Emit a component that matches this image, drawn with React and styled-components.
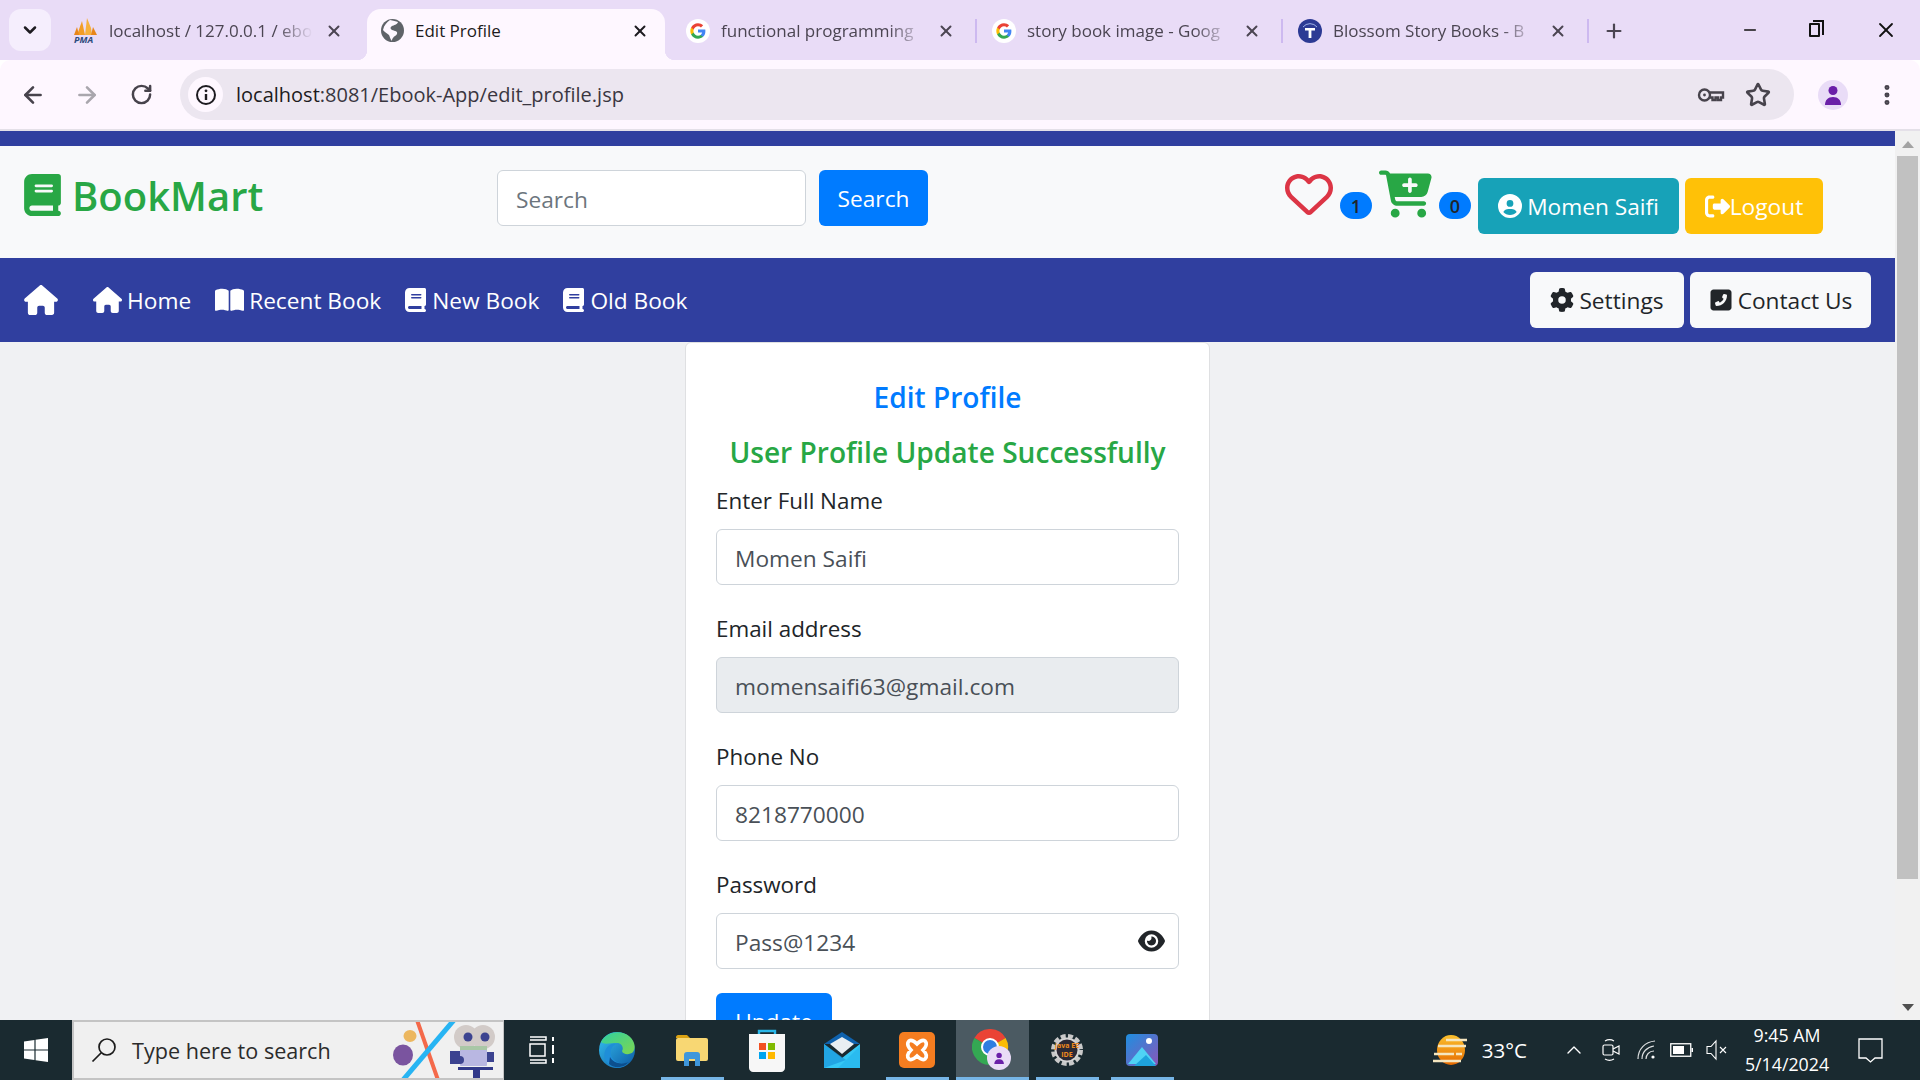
import React from 'react';
import styled, { createGlobalStyle } from 'styled-components';
import { ArrowLeft, ArrowRight, RotateCw, Star, X, Plus, Minus, ChevronDown, ChevronUp, EllipsisVertical } from 'lucide-react';
import {
  FaBook, FaHouse, FaBookOpen, FaRegHeart, FaCartPlus, FaCircleUser, FaRightFromBracket,
  FaGear, FaSquarePhoneFlip, FaEye,
} from 'react-icons/fa6';

const Global = createGlobalStyle`
  html, body { margin: 0; padding: 0; overflow: hidden; }
  * { box-sizing: border-box; }
  body { font-family: "Open Sans", "Liberation Sans", sans-serif; }
`;

const Screen = styled.div`
  width: 1920px;
  height: 1080px;
  display: flex;
  flex-direction: column;
  overflow: hidden;
`;

/* browser chrome */
const TabStrip = styled.div`
  height: 60px;
  flex: none;
  display: flex;
  align-items: stretch;
  padding-top: 9px;
  padding-left: 9px;
  background: #e9dcf7;
`;
const TabList = styled.div`
  width: 42px;
  height: 42px;
  margin-right: 8px;
  border-radius: 12px;
  background: #f5eefd;
  display: flex;
  align-items: center;
  justify-content: center;
  color: #1d1b20;
`;
const Tab = styled.div`
  position: relative;
  width: 298px;
  margin: 0 4px 0 2px;
  padding: 0 16px 8px 14px;
  display: flex;
  align-items: center;
  border-radius: 14px 14px 0 0;
  background: ${p => (p.$active ? '#fef7ff' : 'transparent')};
  color: ${p => (p.$active ? '#1d1b20' : '#4b4552')};
  ${p => p.$active && `
    &::before, &::after {
      content: '';
      position: absolute;
      bottom: 0;
      width: 10px;
      height: 10px;
    }
    &::before { left: -10px; background: radial-gradient(circle at 0 0, transparent 10px, #fef7ff 10.5px); }
    &::after { right: -10px; background: radial-gradient(circle at 100% 0, transparent 10px, #fef7ff 10.5px); }
  `}
`;
const Favicon = styled.span`
  width: 22px;
  height: 22px;
  flex: none;
  margin-right: 12px;
  display: flex;
  align-items: center;
  justify-content: center;
  svg { flex: none; }
`;
const TabTitle = styled.span`
  flex: 1;
  min-width: 0;
  margin-right: 12px;
  font-size: 17px;
  white-space: nowrap;
  overflow: hidden;
  ${p => p.$fade && `mask-image: linear-gradient(to right, #000 82%, transparent 100%);`}
`;
const TabSep = styled.span`
  width: 2px;
  height: 24px;
  margin-top: 10px;
  background: ${p => (p.$show ? '#cdb9f0' : 'transparent')};
`;
const NewTab = styled.span`
  margin: 11px 0 0 14px;
  height: 22px;
  color: #4b4552;
`;
const WindowControls = styled.div`
  margin: -9px 0 0 auto;
  display: flex;
`;
const WindowButton = styled.span`
  width: 68px;
  height: 60px;
  display: flex;
  align-items: center;
  justify-content: center;
  color: #111;
`;
const RestoreGlyph = styled.span`
  position: relative;
  width: 11px;
  height: 14px;
  margin-right: 7px;
  border: 2px solid #111;
  border-radius: 1px;
  &::after {
    content: '';
    position: absolute;
    left: 2px;
    top: -5px;
    width: 9px;
    height: 13px;
    border-top: 2px solid #111;
    border-right: 2px solid #111;
  }
`;

const Toolbar = styled.div`
  height: 71px;
  flex: none;
  display: flex;
  align-items: flex-start;
  padding: 9px 0 0 6px;
  background: #fef7ff;
  border-bottom: 2px solid #e4e0e8;
  border-radius: 10px 10px 0 0;
`;
const NavButton = styled.span`
  width: 54px;
  height: 51px;
  display: flex;
  align-items: center;
  justify-content: center;
  color: ${p => (p.$off ? '#a9a6ad' : '#47434c')};
`;
const Omnibox = styled.div`
  width: 1614px;
  height: 51px;
  margin-left: 12px;
  padding: 0 23px 0 8px;
  border-radius: 26px;
  background: #ece6f0;
  display: flex;
  align-items: center;
`;
const InfoChip = styled.span`
  width: 35px;
  height: 35px;
  margin-right: 13px;
  border-radius: 50%;
  background: #fef7ff;
  display: flex;
  align-items: center;
  justify-content: center;
`;
const Url = styled.span`
  flex: 1;
  font-size: 20px;
  color: #3a3640;
  b { font-weight: 400; color: #1d1b20; }
`;
const OmniIcon = styled.span`
  margin-left: 20px;
  display: flex;
  color: #47434c;
`;
const Avatar = styled.span`
  width: 30px;
  height: 30px;
  margin: 11px 0 0 24px;
  border-radius: 50%;
  background: #e9dcf7;
  display: flex;
  align-items: center;
  justify-content: center;
`;
const Kebab = styled.span`
  margin: 13px 0 0 26px;
  color: #47434c;
`;

/* page */
const Viewport = styled.div`
  flex: 1;
  min-height: 0;
  display: flex;
`;
const Page = styled.div`
  flex: 1;
  min-width: 0;
  display: flex;
  flex-direction: column;
`;
const Stripe = styled.div`
  height: 15px;
  flex: none;
  background: #303f9f;
`;
const Header = styled.header`
  height: 112px;
  flex: none;
  padding: 24px 72px 0 24px;
  display: flex;
  align-items: flex-start;
  background: #f8f9fa;
`;
const Logo = styled.div`
  width: 473px;
  margin-top: 4px;
  display: flex;
  align-items: center;
  gap: 11px;
  color: #28a745;
  font-size: 40px;
  line-height: 44px;
  font-weight: 600;
`;
const LogoIcon = styled(FaBook)`
  width: 37px;
  height: 42px;
  margin-top: -2px;
`;
const SearchForm = styled.form`
  display: flex;
  gap: 13px;
`;
const Input = styled.input`
  display: block;
  width: ${p => p.$w || '100%'};
  height: 56px;
  padding: 2px 18px 0;
  border: 1px solid #ced4da;
  border-radius: 6px;
  background: ${p => (p.disabled ? '#e9ecef' : '#fff')};
  color: #495057;
  font: 400 22.7px "Open Sans", sans-serif;
  opacity: 1;
  -webkit-text-fill-color: #495057;
  &::placeholder { color: #6c757d; -webkit-text-fill-color: #6c757d; opacity: 1; }
`;
const Button = styled.button`
  height: 56px;
  width: ${p => p.$w};
  margin-top: ${p => p.$mt || 0};
  padding: 0;
  flex: none;
  border: 0;
  border-radius: 6px;
  background: ${p => p.$bg || '#007bff'};
  color: ${p => p.$fg || '#fff'};
  font: 400 22.7px "Open Sans", sans-serif;
  display: flex;
  align-items: center;
  justify-content: center;
  gap: ${p => p.$gap || '5px'};
`;
const UserTools = styled.div`
  margin-left: auto;
  display: flex;
  align-items: flex-start;
  gap: 7px;
`;
const Heart = styled(FaRegHeart)`
  width: 48px;
  height: 48px;
  color: #dc3545;
`;
const Cart = styled(FaCartPlus)`
  width: 53px;
  height: 48px;
  color: #28a745;
`;
const Badge = styled.span`
  width: 32px;
  height: 27px;
  margin-top: 22px;
  border-radius: 14px;
  background: #007bff;
  color: #212529;
  font-size: 18px;
  font-weight: 600;
  display: flex;
  align-items: center;
  justify-content: center;
`;
const HeadButtons = styled.div`
  margin-top: 8px;
  display: flex;
  gap: 6px;
`;
const NavBar = styled.nav`
  height: 84px;
  flex: none;
  padding: 0 24px;
  display: flex;
  align-items: center;
  background: #303f9f;
`;
const BrandHome = styled(FaHouse)`
  width: 34px;
  height: 30px;
  margin-right: 35px;
  color: #fff;
`;
const NavLink = styled.a`
  margin-right: 24px;
  display: flex;
  align-items: center;
  gap: ${p => p.$gap || '5px'};
  color: #fff;
  font-size: 22.7px;
  svg { width: ${p => p.$icon || '29px'}; height: 26px; }
`;
const NavRight = styled.div`
  margin-left: auto;
  display: flex;
  gap: 6px;
`;
const Main = styled.main`
  flex: 1;
  min-height: 0;
  overflow: hidden;
  display: flex;
  justify-content: center;
  background: #f0f1f3;
`;
const Card = styled.section`
  width: 525px;
  height: 720px;
  flex: none;
  padding: 37px 30px 0;
  border: 1px solid #dfe0e2;
  border-radius: 6px;
  background: #fff;
`;
const Title = styled.h5`
  margin: 0 0 ${p => p.$mb};
  height: 35px;
  text-align: center;
  font-size: 28.1px;
  line-height: 35px;
  font-weight: 600;
  color: ${p => p.$color};
`;
const Group = styled.div`
  position: relative;
  margin-bottom: 26px;
`;
const Label = styled.label`
  display: block;
  height: 35px;
  margin-bottom: 11px;
  font-size: 22.4px;
  line-height: 35px;
  color: #212529;
`;
const EyeIcon = styled(FaEye)`
  position: absolute;
  right: 14px;
  bottom: 16px;
  width: 27px;
  height: 24px;
  color: #212529;
`;
const Track = styled.aside`
  width: 25px;
  flex: none;
  padding: 0 2px;
  display: flex;
  flex-direction: column;
  align-items: stretch;
  background: #f1f1f1;
`;
const Arrow = styled.span`
  width: 0;
  height: 0;
  margin: ${p => p.$m};
  align-self: center;
  border-left: 6px solid transparent;
  border-right: 6px solid transparent;
  ${p => (p.$down ? 'border-top: 7px solid #505050;' : 'border-bottom: 7px solid #a3a3a3;')}
`;
const Thumb = styled.span`
  height: 723px;
  background: #c1c1c1;
`;

/* taskbar */
const Taskbar = styled.footer`
  height: 60px;
  flex: none;
  display: flex;
  align-items: stretch;
  background: #1a2a30;
  color: #fff;
`;
const StartButton = styled.span`
  width: 72px;
  display: flex;
  align-items: center;
  justify-content: center;
`;
const SearchBox = styled.div`
  width: 432px;
  padding-left: 17px;
  display: flex;
  align-items: center;
  border: 2px solid #c4c4c4;
  border-right-width: 1px;
  background: #f0f0f0;
  color: #2b2b2b;
  font-size: 21.6px;
  overflow: hidden;
`;
const SearchText = styled.span`
  margin-left: 15px;
  flex: 1;
`;
const AppSlot = styled.span`
  width: 75px;
  display: flex;
  align-items: center;
  justify-content: center;
  border-bottom: 3px solid ${p => (p.$open ? '#76b5e6' : 'transparent')};
  padding-top: 3px;
  background-clip: padding-box;
  background-color: ${p => (p.$active ? '#4b5a62' : 'transparent')};
  ${p => p.$open && !p.$active && 'border-image: linear-gradient(to right, transparent 8px, #76b5e6 8px, #76b5e6 calc(100% - 6px), transparent calc(100% - 6px)) 1;'}
  ${p => p.$active && 'margin-left: 2px; width: 73px;'}
`;
const Tray = styled.div`
  margin-left: auto;
  display: flex;
  align-items: center;
`;
const TrayIcon = styled.span`
  display: flex;
  margin-left: ${p => p.$ml};
`;
const Temp = styled.span`
  margin-left: 14px;
  font-size: 20.5px;
`;
const Clock = styled.div`
  width: 118px;
  text-align: center;
  font-size: 17.8px;
  line-height: 29px;
`;

/* drawn icons */
const GoogleIcon = () => (
  <svg width="24" height="24" viewBox="0 0 24 24">
    <circle cx="12" cy="12" r="12" fill="#fff" />
    <g transform="translate(3.6 3.6) scale(.7)">
      <path fill="#4285F4" d="M22.56 12.25c0-.78-.07-1.53-.2-2.25H12v4.26h5.92c-.26 1.37-1.04 2.53-2.21 3.31v2.77h3.57c2.08-1.92 3.28-4.74 3.28-8.09z" />
      <path fill="#34A853" d="M12 23c2.97 0 5.46-.98 7.28-2.66l-3.57-2.77c-.98.66-2.23 1.06-3.71 1.06-2.86 0-5.29-1.93-6.16-4.53H2.18v2.84C3.99 20.53 7.7 23 12 23z" />
      <path fill="#FBBC05" d="M5.84 14.09c-.22-.66-.35-1.36-.35-2.09s.13-1.43.35-2.09V7.07H2.18C1.43 8.55 1 10.22 1 12s.43 3.45 1.18 4.93l2.85-2.22.81-.62z" />
      <path fill="#EA4335" d="M12 5.38c1.62 0 3.06.56 4.21 1.64l3.15-3.15C17.45 2.09 14.97 1 12 1 7.7 1 3.99 3.47 2.18 7.07l3.66 2.84c.87-2.6 3.3-4.53 6.16-4.53z" />
    </g>
  </svg>
);
const PmaIcon = () => (
  <svg width="28" height="28" viewBox="0 0 28 28">
    <path fill="#f29d26" d="M5 18 10 4l3 14z" />
    <path fill="#f6b13c" d="M13 18 15 1l4 10 1 7z" />
    <path fill="#e8861a" d="M2 18 5 10l2 8zM19 18l2-8 4 8z" />
    <text x="2" y="26" fontSize="9" fontWeight="700" fontStyle="italic" fontFamily="Open Sans" fill="#2c4a7c">PMA</text>
  </svg>
);
const GlobeIcon = () => (
  <svg width="23" height="23" viewBox="0 0 23 23">
    <circle cx="11.5" cy="11.500" r="11.500" fill="#5f6368" />
    <path d="M9 1c3 1 6 1 8 2-1 3-4 3-6 4-2 1-2 3 0 4 3 1 6 1 5 4-1 2-3 2-4 4-1 1-1 2-1 3-2-2-2-4-3-6-2-2-5-3-6-5C3 6 6 3 9 1z" fill="#fef7ff" />
  </svg>
);
const BlossomIcon = () => (
  <svg width="24" height="24" viewBox="0 0 24 24">
    <circle cx="12" cy="12" r="12" fill="#2c3a94" />
    <path d="M5 8a9 9 0 0 1 14 0" fill="none" stroke="#9fb2e8" strokeWidth="1" />
    <path d="M7 9h10v2.400h-3.600V19h-2.800v-7.600H7z" fill="#fff" />
  </svg>
);
const KeyIcon = () => (
  <svg width="28" height="20" viewBox="0 0 28 20" fill="none" stroke="#47434c" strokeWidth="2.4">
    <circle cx="7.5" cy="10" r="5.5" />
    <circle cx="7.5" cy="10" r="1.4" fill="#47434c" strokeWidth="0" />
    <path d="M13 7.5h13v5h-2v2.500h-3v-2.500h-2.500v2.500h-3v-2.500H13" />
  </svg>
);
const InfoIcon = () => (
  <svg width="22" height="22" viewBox="0 0 22 22" fill="none" stroke="#1d1b20" strokeWidth="2">
    <circle cx="11" cy="11" r="9" />
    <path d="M11 10v6" strokeWidth="2.4" />
    <circle cx="11" cy="6.8" r="1.4" fill="#1d1b20" stroke="none" />
  </svg>
);
const PersonIcon = ({ size = 22 }) => (
  <svg width={size} height={size} viewBox="0 0 22 22" fill="#6a1fa8">
    <circle cx="11" cy="6.5" r="4.5" />
    <path d="M3 21c0-5 3-8 8-8s8 3 8 8z" />
  </svg>
);
const WindowsLogo = () => (
  <svg width="24" height="24" viewBox="0 0 24 24" fill="#fff">
    <path d="M0 3.400 10.400 2v9.400H0zM11.600 1.800 24 0v11.400H11.600zM0 12.600h10.400V22L0 20.600zM11.600 12.600H24V24l-12.400-1.800z" />
  </svg>
);
const Magnifier = () => (
  <svg width="26" height="26" viewBox="0 0 26 26" fill="none" stroke="#1c1c1c" strokeWidth="1.7">
    <circle cx="16" cy="10" r="8" />
    <path d="M10 16 1.500 24.500" />
  </svg>
);
const SearchArt = () => (
  <svg width="116" height="56" viewBox="0 0 116 56">
    <path d="M30 -2 51 58" stroke="#f4694a" strokeWidth="4" />
    <path d="M67 -2 16 58" stroke="#27b4f3" strokeWidth="5" />
    <ellipse cx="16" cy="33" rx="10" ry="10.500" fill="#7a549f" />
    <ellipse cx="23" cy="14" rx="6.500" ry="6" fill="#ecb75f" />
    <circle cx="79" cy="15" r="12" fill="#d2cbc8" />
    <circle cx="96" cy="15" r="12" fill="#d2cbc8" />
    <circle cx="81" cy="15" r="4.500" fill="#3c4390" />
    <circle cx="98" cy="15" r="4.500" fill="#3c4390" />
    <rect x="73" y="24" width="27" height="5" fill="#a9c7a6" />
    <rect x="73" y="28" width="27" height="16" rx="1" fill="#b9b7e2" />
    <path d="M63 29h10v13H63z" fill="#3c4390" />
    <circle cx="73" cy="38" r="4" fill="#3c4390" />
    <path d="M100 30h7v10h-7z" fill="#3c4390" />
    <path d="M71 45h35v3H71zM86 47h7v9h-7z" fill="#32398a" />
  </svg>
);
const TaskViewIcon = () => (
  <svg width="26" height="28" viewBox="0 0 26 28" fill="none" stroke="#fff" strokeWidth="1.5">
    <path d="M1 1h16v3H1M1 27h16v-3H1" />
    <rect x="1" y="8" width="15" height="12" />
    <path d="M24 1v4M24 9v9M24 22v5" strokeWidth="2" />
  </svg>
);
const EdgeIcon = () => (
  <svg width="38" height="38" viewBox="0 0 38 38">
    <defs>
      <linearGradient id="edgeA" x1="0" y1="0" x2="1" y2="1">
        <stop offset="0" stopColor="#35c1f1" />
        <stop offset="1" stopColor="#0c59a4" />
      </linearGradient>
      <linearGradient id="edgeB" x1="0" y1="0" x2="1" y2="1">
        <stop offset="0" stopColor="#2fd0a0" />
        <stop offset="1" stopColor="#7ed64f" />
      </linearGradient>
    </defs>
    <circle cx="19" cy="19" r="18" fill="url(#edgeA)" />
    <path d="M3 11C8 1 22-2 31 5c6 5 7 12 4 16-3 3-10 3-11-1 2-3 0-8-5-8C12 12 6 14 3 11z" fill="url(#edgeB)" />
    <path d="M18 13c-5 2-7 9-3 15 3 4 9 6 16 3-4 6-12 7-18 4-5-3-8-9-6-15 2-5 6-8 11-7z" fill="#1f8ed8" />
    <path d="M12 26c3 6 11 8 19 5-5 6-14 7-20 2z" fill="#0c4f8e" />
  </svg>
);
const ExplorerIcon = () => (
  <svg width="34" height="34" viewBox="0 0 34 34">
    <path d="M1 4c0-1 1-2 2-2h9l3 3H1z" fill="#dba213" />
    <rect x="1" y="5" width="32" height="23" rx="2" fill="#f8d773" />
    <path d="M9 33V22c0-2 1-3 3-3h10c2 0 3 1 3 3v11h-5v-7h-6v7z" fill="#3f97dc" />
  </svg>
);
const StoreIcon = () => (
  <svg width="36" height="44" viewBox="0 0 36 44">
    <path d="M10 9V3h16v6" fill="none" stroke="#29b6e8" strokeWidth="2.4" />
    <path d="M0 6h36v34c0 2-2 4-4 4H4c-2 0-4-2-4-4z" fill="#f7f7f7" />
    <path d="M10 15h7v7h-7z" fill="#f25022" />
    <path d="M19 15h7v7h-7z" fill="#7fba00" />
    <path d="M10 24h7v7h-7z" fill="#00a4ef" />
    <path d="M19 24h7v7h-7z" fill="#ffb900" />
  </svg>
);
const MailIcon = () => (
  <svg width="36" height="36" viewBox="0 0 36 36">
    <path d="M0 12 18 0l18 12z" fill="#0f62ae" />
    <path d="M6 12 18 5l12 7-12 10z" fill="#e9eef2" />
    <path d="M0 12 18 26 36 12v24H0z" fill="#35c8f5" />
    <path d="M0 36V12l22 16z" fill="#1b95dc" opacity=".7" />
    <path d="M36 36H14l22-22z" fill="#18a3e4" opacity=".35" />
  </svg>
);
const XamppIcon = () => (
  <svg width="36" height="36" viewBox="0 0 36 36" fill="none">
    <rect width="36" height="36" rx="5" fill="#f57d20" />
    <path d="M10 9c3-2 6 1 8 3 2-2 5-5 8-3 3 3 0 7-2 9 2 2 5 6 2 9-3 2-6-1-8-3-2 2-5 5-8 3-3-3 0-7 2-9-2-2-5-6-2-9z" stroke="#fff" strokeWidth="3.6" />
    <path d="M15 18h6" stroke="#f57d20" strokeWidth="2" />
  </svg>
);
const ChromeIcon = () => (
  <svg width="42" height="42" viewBox="0 0 42 42">
    <path d="M18 18 2.400 9A18 18 0 0 1 33.600 9Z" fill="#ea4335" />
    <path d="M18 18 33.600 9A18 18 0 0 1 18 36Z" fill="#fbbc05" />
    <path d="M18 18 18 36A18 18 0 0 1 2.400 9Z" fill="#34a853" />
    <circle cx="18" cy="18" r="8" fill="#2f7de1" stroke="#fff" strokeWidth="2" />
    <circle cx="27" cy="29" r="12" fill="#e9dcf7" />
    <g transform="translate(20.500 22.500) scale(.6)"><PersonIcon /></g>
  </svg>
);
const JavaIcon = () => (
  <svg width="34" height="34" viewBox="0 0 34 34">
    <circle cx="17" cy="17" r="14" fill="none" stroke="#c9c9c9" strokeWidth="4" strokeDasharray="5 2.400" />
    <circle cx="17" cy="17" r="12.500" fill="#d4d4d4" />
    <circle cx="17" cy="17" r="10.500" fill="#2b2834" />
    <text x="17" y="15" fontSize="7" fontWeight="700" textAnchor="middle" fontFamily="Open Sans" fill="#f08a1c">Java EE</text>
    <text x="17" y="24" fontSize="7" fontWeight="700" textAnchor="middle" fontFamily="Open Sans" fill="#f08a1c">IDE</text>
  </svg>
);
const PhotosIcon = () => (
  <svg width="32" height="32" viewBox="0 0 32 32">
    <defs>
      <linearGradient id="photoBg" x1="0" y1="0" x2="1" y2="1">
        <stop offset="0" stopColor="#1e8fe0" />
        <stop offset="1" stopColor="#8a56b8" />
      </linearGradient>
    </defs>
    <rect width="32" height="32" rx="4" fill="url(#photoBg)" />
    <circle cx="23" cy="7" r="3" fill="#fff" />
    <path d="M2 30 16 13l14 17z" fill="#4fd2f5" />
    <path d="M8 32l12-11 10 11z" fill="#1ea3dd" />
  </svg>
);
const SunIcon = () => (
  <svg width="36" height="32" viewBox="0 0 36 32">
    <defs>
      <linearGradient id="sun" x1="0" y1="0" x2="0" y2="1">
        <stop offset="0" stopColor="#fbc02d" />
        <stop offset="1" stopColor="#e66a00" />
      </linearGradient>
    </defs>
    <ellipse cx="19" cy="16" rx="14" ry="15" fill="url(#sun)" />
    <path d="M14 6h21M6 12h28M2 20h20M24 20h6M1 27h28" stroke="#f5e6c0" strokeWidth="2.4" />
  </svg>
);
const MeetIcon = () => (
  <svg width="18" height="24" viewBox="0 0 18 24" fill="none" stroke="#fff" strokeWidth="1.2">
    <rect x="1" y="7" width="10" height="10" rx="1.5" />
    <path d="M11 11l6-3v8l-6-3M3 3a9 9 0 0 1 9 0M3 21a9 9 0 0 0 9 0" />
  </svg>
);
const WifiIcon = () => (
  <svg width="20" height="20" viewBox="0 0 20 20" fill="none" stroke="#fff" strokeWidth="1.2">
    <path d="M1 19C1 9 8 2 18 1M5 19c0-7 5-12 12-13M9 19c0-4 3-8 8-8" strokeOpacity=".85" />
    <circle cx="16" cy="17" r="1.6" fill="#fff" stroke="none" />
  </svg>
);
const BatteryIcon = () => (
  <svg width="23" height="14" viewBox="0 0 23 14">
    <rect x=".75" y=".75" width="20" height="12.500" fill="none" stroke="#fff" strokeWidth="1.3" />
    <rect x="3" y="3" width="11" height="8" fill="#fff" />
    <rect x="21.500" y="5" width="1.500" height="4" fill="#fff" />
  </svg>
);
const MuteIcon = () => (
  <svg width="22" height="22" viewBox="0 0 22 22" fill="none" stroke="#fff" strokeWidth="1.1">
    <path d="M1 7.500h4L10 2v18l-5-5.500H1zM14 8l6 6M20 8l-6 6" />
  </svg>
);
const NotifyIcon = () => (
  <svg width="25" height="25" viewBox="0 0 25 25" fill="none" stroke="#fff" strokeWidth="1.3">
    <path d="M1 1h23v19h-7l-4.500 4-4.500-4H1z" />
  </svg>
);

const tabs = [
  { title: 'localhost / 127.0.0.1 / ebo', icon: <PmaIcon />, fade: true },
  { title: 'Edit Profile', icon: <GlobeIcon />, active: true },
  { title: 'functional programming', icon: <GoogleIcon />, fade: true, sep: true },
  { title: 'story book image - Goog', icon: <GoogleIcon />, fade: true, sep: true },
  { title: 'Blossom Story Books - B', icon: <BlossomIcon />, fade: true, sep: true },
];

const fields = [
  { label: 'Enter Full Name', value: 'Momen Saifi' },
  { label: 'Email address', value: 'momensaifi63@gmail.com', disabled: true },
  { label: 'Phone No', value: '8218770000' },
  { label: 'Password', value: 'Pass@1234', eye: true },
];

export default function App() {
  return (
    <Screen>
      <Global />
      <TabStrip>
        <TabList><ChevronDown size={20} strokeWidth={3} /></TabList>
        {tabs.map(t => (
          <React.Fragment key={t.title}>
            <Tab $active={t.active}>
              <Favicon>{t.icon}</Favicon>
              <TabTitle $fade={t.fade}>{t.title}</TabTitle>
              <X size={18} strokeWidth={2.6} />
            </Tab>
            <TabSep $show={t.sep} />
          </React.Fragment>
        ))}
        <NewTab><Plus size={22} strokeWidth={2.4} /></NewTab>
        <WindowControls>
          <WindowButton><Minus size={18} strokeWidth={2.2} /></WindowButton>
          <WindowButton><RestoreGlyph /></WindowButton>
          <WindowButton><X size={24} strokeWidth={1.8} /></WindowButton>
        </WindowControls>
      </TabStrip>

      <Toolbar>
        <NavButton><ArrowLeft size={26} strokeWidth={2.4} /></NavButton>
        <NavButton $off><ArrowRight size={26} strokeWidth={2.4} /></NavButton>
        <NavButton><RotateCw size={23} strokeWidth={2.6} /></NavButton>
        <Omnibox>
          <InfoChip><InfoIcon /></InfoChip>
          <Url><b>localhost</b>:8081/Ebook-App/edit_profile.jsp</Url>
          <OmniIcon><KeyIcon /></OmniIcon>
          <OmniIcon><Star size={26} strokeWidth={2.4} /></OmniIcon>
        </Omnibox>
        <Avatar><PersonIcon /></Avatar>
        <Kebab><EllipsisVertical size={26} strokeWidth={2.6} /></Kebab>
      </Toolbar>

      <Viewport>
        <Page>
          <Stripe />
          <Header>
            <Logo><LogoIcon />BookMart</Logo>
            <SearchForm>
              <Input $w="309px" placeholder="Search" />
              <Button type="button" $w="109px">Search</Button>
            </SearchForm>
            <UserTools>
              <Heart />
              <Badge>1</Badge>
              <Cart />
              <Badge>0</Badge>
              <HeadButtons>
                <Button type="button" $w="201px" $bg="#17a2b8"><FaCircleUser size={24} />Momen Saifi</Button>
                <Button type="button" $w="138px" $bg="#ffc107" $gap="0"><FaRightFromBracket size={25} />Logout</Button>
              </HeadButtons>
            </UserTools>
          </Header>
          <NavBar>
            <BrandHome />
            <NavLink><FaHouse />Home</NavLink>
            <NavLink><FaBookOpen />Recent Book</NavLink>
            <NavLink $icon="21px" $gap="6px"><FaBook />New Book</NavLink>
            <NavLink $icon="21px" $gap="6px"><FaBook />Old Book</NavLink>
            <NavRight>
              <Button type="button" $w="154px" $bg="#f8f9fa" $fg="#212529"><FaGear size={24} />Settings</Button>
              <Button type="button" $w="181px" $bg="#f8f9fa" $fg="#212529"><FaSquarePhoneFlip size={24} />Contact Us</Button>
            </NavRight>
          </NavBar>
          <Main>
            <Card>
              <Title $color="#007bff" $mb="20px">Edit Profile</Title>
              <Title $color="#28a745" $mb="13px">User Profile Update Successfully</Title>
              {fields.map(f => (
                <Group key={f.label}>
                  <Label>{f.label}</Label>
                  <Input defaultValue={f.value} disabled={f.disabled} />
                  {f.eye && <EyeIcon />}
                </Group>
              ))}
              <Button type="button" $w="116px" $mt="-2px">Update</Button>
            </Card>
          </Main>
        </Page>
        <Track>
          <Arrow $m="10px 0 8px" />
          <Thumb />
          <Arrow $down $m="auto 0 9px" />
        </Track>
      </Viewport>

      <Taskbar>
        <StartButton><WindowsLogo /></StartButton>
        <SearchBox>
          <Magnifier />
          <SearchText>Type here to search</SearchText>
          <SearchArt />
        </SearchBox>
        <AppSlot><TaskViewIcon /></AppSlot>
        <AppSlot><EdgeIcon /></AppSlot>
        <AppSlot $open><ExplorerIcon /></AppSlot>
        <AppSlot><StoreIcon /></AppSlot>
        <AppSlot><MailIcon /></AppSlot>
        <AppSlot $open><XamppIcon /></AppSlot>
        <AppSlot $open $active><ChromeIcon /></AppSlot>
        <AppSlot $open><JavaIcon /></AppSlot>
        <AppSlot $open><PhotosIcon /></AppSlot>
        <Tray>
          <SunIcon />
          <Temp>33°C</Temp>
          <TrayIcon $ml="35px"><ChevronUp size={24} strokeWidth={1.4} /></TrayIcon>
          <TrayIcon $ml="16px"><MeetIcon /></TrayIcon>
          <TrayIcon $ml="17px"><WifiIcon /></TrayIcon>
          <TrayIcon $ml="13px"><BatteryIcon /></TrayIcon>
          <TrayIcon $ml="13px"><MuteIcon /></TrayIcon>
          <Clock>9:45 AM<br />5/14/2024</Clock>
          <TrayIcon $ml="12px"><NotifyIcon /></TrayIcon>
          <TrayIcon $ml="37px" />
        </Tray>
      </Taskbar>
    </Screen>
  );
}
